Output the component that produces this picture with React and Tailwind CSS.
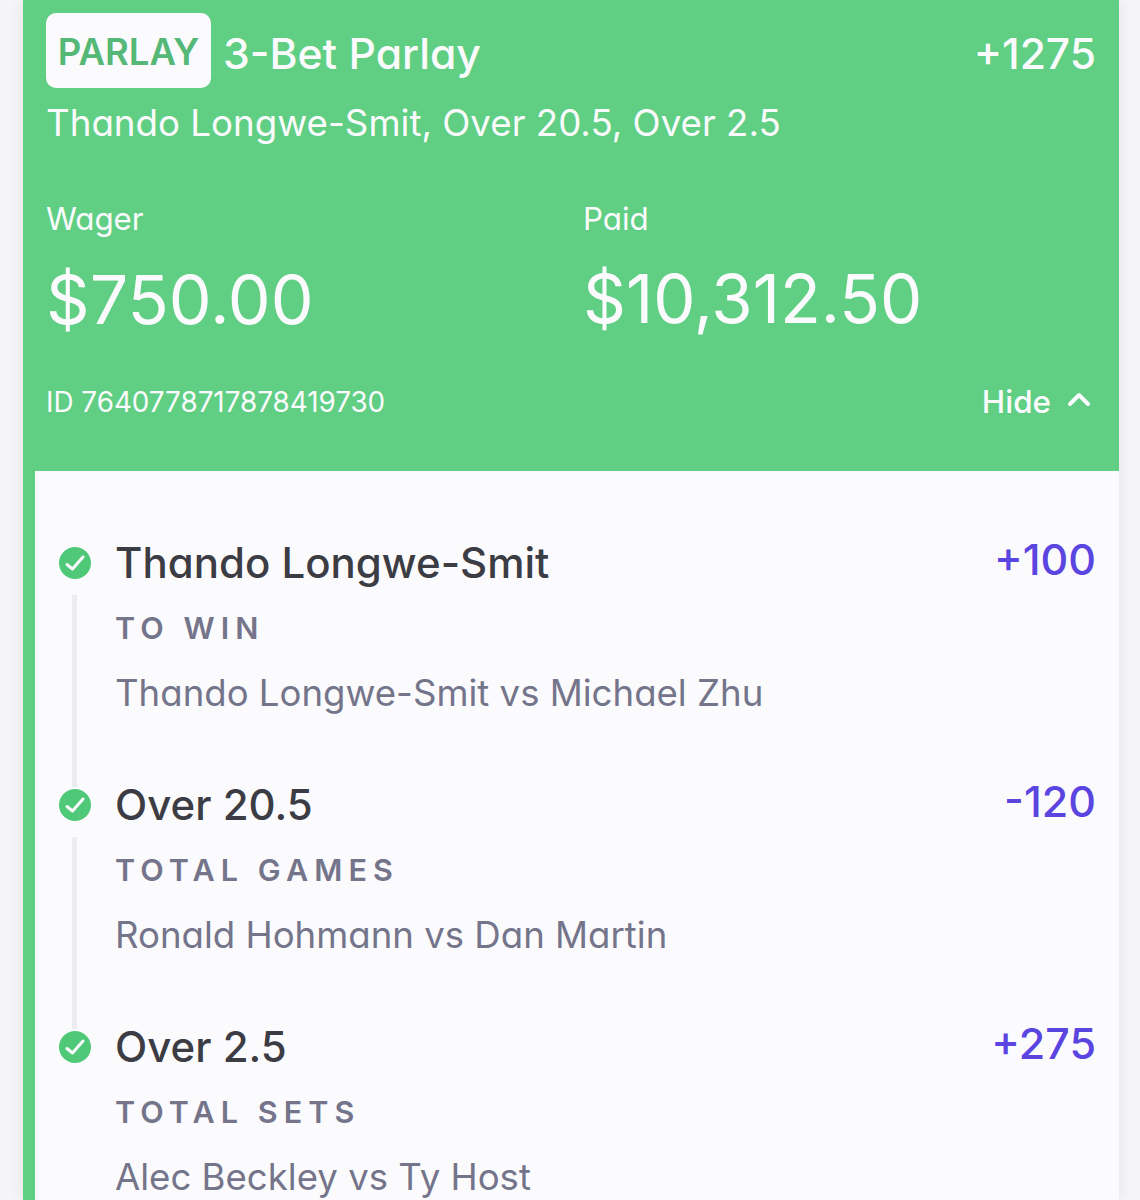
const legs = [
  { name: "Thando Longwe-Smit", odds: "+100", market: "TO WIN", match: "Thando Longwe-Smit vs Michael Zhu" },
  { name: "Over 20.5", odds: "-120", market: "TOTAL GAMES", match: "Ronald Hohmann vs Dan Martin" },
  { name: "Over 2.5", odds: "+275", market: "TOTAL SETS", match: "Alec Beckley vs Ty Host" },
];

function Check() {
  return (
    <svg width="32" height="32" viewBox="0 0 32 32" className="shrink-0">
      <circle cx="16" cy="16" r="16" fill="#4fc878" />
      <path d="M8 17.5l5.5 4.5L24 10" fill="none" stroke="#fbfbfe" strokeWidth="3" strokeLinecap="round" strokeLinejoin="round" />
    </svg>
  );
}

function Leg({ leg, last }) {
  return (
    <div className="relative h-[242px] pl-[80px] pr-[23px]">
      <div className="absolute left-[24px] top-[7px]">
        <Check />
      </div>
      {!last && <div className="absolute left-[37px] top-[55px] h-[192px] w-[5px] bg-[#ececf0]" />}
      <div className="flex items-start justify-between">
        <div className="text-[42px] leading-[46px] font-[550] text-[#3c3c44]">{leg.name}</div>
        <div className="text-[43px] leading-[38px] font-[550] text-[#5b45e0]">{leg.odds}</div>
      </div>
      <div className="mt-[24px] text-[30.5px] leading-[36px] font-semibold tracking-[0.2em] text-[#74748a]">{leg.market}</div>
      <div className="mt-[24px] text-[36.6px] leading-[46px] text-[#74748a]">{leg.match}</div>
    </div>
  );
}

export default function App() {
  return (
    <div className="h-[1200px] w-[1140px] overflow-hidden bg-[#f5f5f8] font-['Inter',sans-serif] [font-feature-settings:'cv11']">
      <div className="ml-[23px] h-full w-[1096px] bg-[#60cf84] shadow-[0_0_14px_rgba(0,0,0,0.08)]">
        <div className="h-[471px] pl-[23px] pr-[23px] pt-[13px] text-[#fbfbfe]">
          <div className="flex items-start justify-between">
            <div className="flex items-center gap-3">
              <div className="flex h-[75px] w-[165px] items-center justify-center rounded-[10px] bg-[#fbfbfe] pt-[4px] text-[36.5px] font-semibold text-[#55b877]">PARLAY</div>
              <div className="pt-[7px] text-[42.7px] font-[550]">3-Bet Parlay</div>
            </div>
            <div className="mt-[17px] text-[42.5px] leading-[48px] font-[550]">+1275</div>
          </div>
          <div className="mt-[12px] text-[36.7px] leading-[46px]">Thando Longwe-Smit, Over 20.5, Over 2.5</div>
          <div className="mt-[55px] grid grid-cols-[537px_1fr]">
            <div>
              <div className="text-[31.3px] leading-[36px]">Wager</div>
              <div className="mt-[24px] text-[68px] leading-[76px]">$750.00</div>
            </div>
            <div>
              <div className="text-[31.3px] leading-[36px]">Paid</div>
              <div className="mt-[24px] text-[67px] leading-[76px]">$10,312.50</div>
            </div>
          </div>
          <div className="mt-[47px] flex items-center justify-between">
            <div className="text-[27.8px] leading-[36px]">ID 7640778717878419730</div>
            <div className="flex items-center gap-[16px] pr-[5px] text-[31.4px] leading-[36px] font-medium">
              <span className="-mt-[1px]">Hide</span>
              <svg width="24" height="16" viewBox="0 0 24 16" fill="none" stroke="#fbfbfe" strokeWidth="4" strokeLinecap="round" strokeLinejoin="round" className="mb-[6px]">
                <path d="M3 13l9-9 9 9" />
              </svg>
            </div>
          </div>
        </div>
        <div className="ml-[12px] h-[729px] bg-[#fbfbfe] pt-[69px]">
          {legs.map((leg, i) => (
            <Leg key={leg.name} leg={leg} last={i === legs.length - 1} />
          ))}
        </div>
      </div>
    </div>
  );
}
